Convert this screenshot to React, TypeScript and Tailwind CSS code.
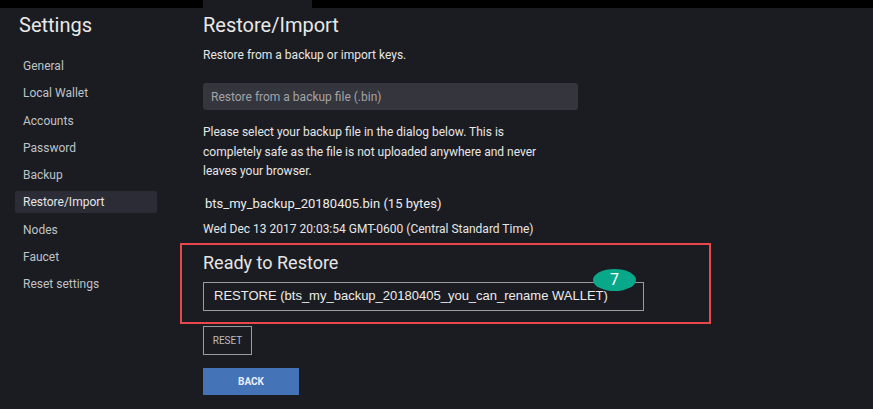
const nav = [
  "General",
  "Local Wallet",
  "Accounts",
  "Password",
  "Backup",
  "Restore/Import",
  "Nodes",
  "Faucet",
  "Reset settings",
];

export default function App() {
  return (
    <div className="flex h-[409px] w-[873px] flex-col overflow-hidden bg-[#1b1c21] font-['Roboto',sans-serif] text-[#d6d6d6]">
      <div className="flex h-[8px] shrink-0 bg-black">
        <div className="ml-[203px] w-[109px] bg-[#1b1c21]" />
      </div>
      <div className="flex flex-1">
        <aside className="w-[180px] shrink-0 pl-[15px]">
          <h1 className="mt-[5px] pl-[4px] text-[20px] leading-[24px] text-[#e8e8e8]">Settings</h1>
          <ul className="mt-[18px] w-[142px]">
            {nav.map((item) => (
              <li
                key={item}
                className={
                  "flex h-[22px] items-center rounded-[2px] pl-[8px] text-[12px] mb-[5.3px] " +
                  (item === "Restore/Import" ? "bg-[#2b2c36] text-[#e6e6e6]" : "text-[#bfc3c8]")
                }
              >
                {item}
              </li>
            ))}
          </ul>
        </aside>
        <main className="flex-1 pl-[23px]">
          <h2 className="mt-[5px] text-[20px] leading-[24px] text-[#e8e8e8]">Restore/Import</h2>
          <p className="mt-[11px] text-[12px] leading-[14px] text-[#e6e6e6]">Restore from a backup or import keys.</p>
          <div className="mt-[21px] flex h-[27px] w-[375px] items-center rounded-[3px] bg-[#34353d] pl-[8px] text-[12px] text-[#a3a4a8]">
            Restore from a backup file (.bin)
          </div>
          <p className="mt-[13px] w-[350px] text-[12px] leading-[19.5px] text-[#e6e6e6]">
            Please select your backup file in the dialog below. This is completely safe as the file is not uploaded anywhere and never leaves your browser.
          </p>
          <p className="mt-[14px] pl-[2px] text-[13px] leading-[16px] text-[#ececec]">bts_my_backup_20180405.bin (15 bytes)</p>
          <p className="mt-[9px] text-[12px] leading-[16px] text-[#e6e6e6]">Wed Dec 13 2017 20:03:54 GMT-0600 (Central Standard Time)</p>
          <div className="relative -ml-[23px] mt-[6px] h-[81px] w-[531px] border-2 border-[#e8474c] pl-[21px]">
            <h3 className="mt-[7px] text-[18px] leading-[22px] text-[#e6e6e6]">Ready to Restore</h3>
            <div className="mt-[8px] flex h-[29px] w-[441px] items-center border border-[#9b9b9b] pl-[10px] font-['Liberation_Sans',sans-serif] text-[13px] text-[#ececec]">
              RESTORE (bts_my_backup_20180405_you_can_rename WALLET)
            </div>
            <div className="absolute left-[411px] top-[24px] flex h-[22px] w-[43px] items-center justify-center rounded-[50%] bg-[#0aa88a] text-[16px] text-white">
              7
            </div>
          </div>
          <button className="mt-[2px] flex h-[29px] w-[49px] items-center justify-center border border-[#9b9b9b] text-[10px] text-[#b8bcc2]">
            RESET
          </button>
          <button className="mt-[13px] flex h-[27px] w-[96px] items-center justify-center bg-[#4473b8] text-[10px] font-bold text-[#e8eef8]">
            BACK
          </button>
        </main>
      </div>
    </div>
  );
}
